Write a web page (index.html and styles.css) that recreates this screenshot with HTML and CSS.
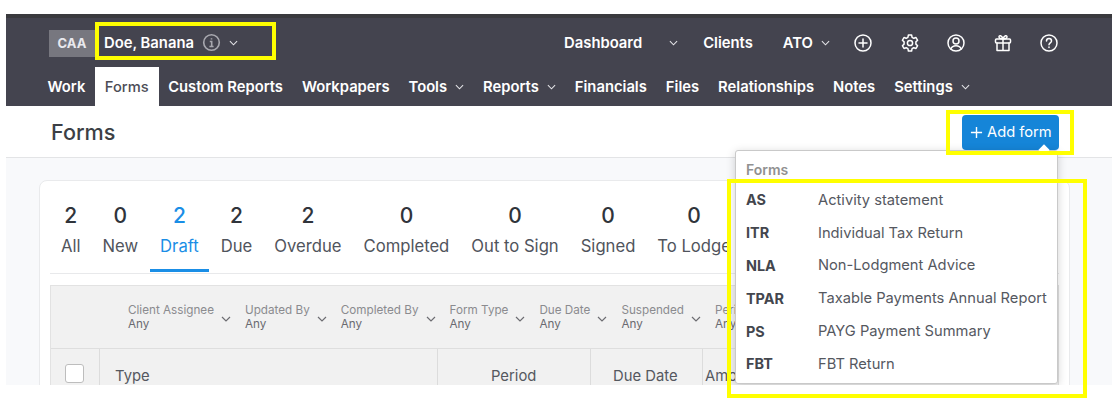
FILE: index.html
```html
<!DOCTYPE html>
<html lang="en">
<head>
<meta charset="utf-8">
<title>Forms</title>
<link rel="stylesheet" href="styles.css">
</head>
<body>
<div class="app">
  <header class="masthead">
    <div class="toprow">
      <span class="badge">CAA</span>
      <span class="client">Doe, Banana</span>
      <svg class="info" viewBox="0 0 20 20"><circle cx="10" cy="10" r="8.2"/><path d="M8.2 9h2v5M7.8 14.2h4.4M10 5.6v1.2"/></svg>
      <svg class="chev" viewBox="0 0 10 6"><path d="M1 1l4 4 4-4"/></svg>
      <nav class="topnav">
        <a class="toplink">Dashboard</a>
        <svg class="chev dash-chev" viewBox="0 0 10 6"><path d="M1 1l4 4 4-4"/></svg>
        <a class="toplink clients">Clients</a>
        <a class="toplink ato">ATO</a>
        <svg class="chev" viewBox="0 0 10 6"><path d="M1 1l4 4 4-4"/></svg>
        <div class="icons">
          <svg viewBox="0 0 20 20"><circle cx="10" cy="10" r="8"/><path d="M10 6v8M6 10h8"/></svg>
          <svg viewBox="0 0 20 20"><path d="M8.4 2h3.2l.5 2.3 1.7 1 2.2-.8 1.6 2.8-1.7 1.6v2.2l1.7 1.6-1.6 2.8-2.2-.8-1.7 1-.5 2.3H8.4l-.5-2.3-1.7-1-2.2.8-1.6-2.8 1.7-1.6V8.900L2.400 7.300 4 4.500l2.200.8 1.700-1z"/><circle cx="10" cy="10" r="2.600"/></svg>
          <svg viewBox="0 0 20 20"><circle cx="10" cy="10" r="8"/><circle cx="10" cy="8" r="3"/><path d="M4.800 16c1-2.400 3-3.200 5.200-3.200s4.200.8 5.200 3.200"/></svg>
          <svg viewBox="0 0 20 20"><rect x="2.500" y="6" width="15" height="4" rx="1"/><path d="M4 10v7.500h12V10M10 6v11.500M10 6C8 6 6 5.500 6 3.800 6 2 8.800 2 10 6zM10 6c2 0 4-.5 4-2.200C14 2 11.200 2 10 6z"/></svg>
          <svg viewBox="0 0 20 20"><circle cx="10" cy="10" r="8"/><path d="M7.500 8c0-3.200 5-3.200 5 0 0 2-2.500 1.800-2.500 3.800M10 14v.6"/></svg>
        </div>
      </nav>
    </div>
    <nav class="mainnav">
      <a class="navitem">Work</a>
      <a class="navitem active">Forms</a>
      <a class="navitem">Custom Reports</a>
      <a class="navitem">Workpapers</a>
      <a class="navitem">Tools<svg class="chev" viewBox="0 0 10 6"><path d="M1 1l4 4 4-4"/></svg></a>
      <a class="navitem">Reports<svg class="chev" viewBox="0 0 10 6"><path d="M1 1l4 4 4-4"/></svg></a>
      <a class="navitem">Financials</a>
      <a class="navitem">Files</a>
      <a class="navitem">Relationships</a>
      <a class="navitem">Notes</a>
      <a class="navitem">Settings<svg class="chev" viewBox="0 0 10 6"><path d="M1 1l4 4 4-4"/></svg></a>
    </nav>
  </header>

  <div class="pagehead">
    <h1>Forms</h1>
    <button class="addbtn"><svg viewBox="0 0 14 14"><path d="M7 1v12M1 7h12"/></svg>Add form</button>
  </div>

  <main class="content">
    <section class="card">
      <div class="tabs">
        <div class="tab"><b>2</b><span>All</span></div>
        <div class="tab"><b>0</b><span>New</span></div>
        <div class="tab current"><b>2</b><span>Draft</span></div>
        <div class="tab"><b>2</b><span>Due</span></div>
        <div class="tab"><b>2</b><span>Overdue</span></div>
        <div class="tab"><b>0</b><span>Completed</span></div>
        <div class="tab"><b>0</b><span>Out to Sign</span></div>
        <div class="tab"><b>0</b><span>Signed</span></div>
        <div class="tab"><b>0</b><span>To Lodge</span></div>
      </div>
      <div class="panel">
        <div class="filters">
          <div class="filter"><div><span>Client Assignee</span><em>Any</em></div><svg class="fchev" viewBox="0 0 10 6"><path d="M1 1l4 4 4-4"/></svg></div>
          <div class="filter"><div><span>Updated By</span><em>Any</em></div><svg class="fchev" viewBox="0 0 10 6"><path d="M1 1l4 4 4-4"/></svg></div>
          <div class="filter"><div><span>Completed By</span><em>Any</em></div><svg class="fchev" viewBox="0 0 10 6"><path d="M1 1l4 4 4-4"/></svg></div>
          <div class="filter"><div><span>Form Type</span><em>Any</em></div><svg class="fchev" viewBox="0 0 10 6"><path d="M1 1l4 4 4-4"/></svg></div>
          <div class="filter"><div><span>Due Date</span><em>Any</em></div><svg class="fchev" viewBox="0 0 10 6"><path d="M1 1l4 4 4-4"/></svg></div>
          <div class="filter"><div><span>Suspended</span><em>Any</em></div><svg class="fchev" viewBox="0 0 10 6"><path d="M1 1l4 4 4-4"/></svg></div>
          <div class="filter"><div><span>Period</span><em>Any</em></div></div>
        </div>
        <div class="thead">
          <div class="th th-check"><span class="checkbox"></span></div>
          <div class="th th-type">Type</div>
          <div class="th th-period">Period</div>
          <div class="th th-due">Due Date</div>
          <div class="th th-amt">Amount</div>
        </div>
      </div>
    </section>
  </main>

  <div class="popover">
    <div class="pophead">Forms</div>
    <div class="poprow"><b>AS</b><span>Activity statement</span></div>
    <div class="poprow"><b>ITR</b><span>Individual Tax Return</span></div>
    <div class="poprow"><b>NLA</b><span>Non-Lodgment Advice</span></div>
    <div class="poprow"><b>TPAR</b><span>Taxable Payments Annual Report</span></div>
    <div class="poprow"><b>PS</b><span>PAYG Payment Summary</span></div>
    <div class="poprow"><b>FBT</b><span>FBT Return</span></div>
  </div>
</div>
<div class="mark mark-client"></div>
<div class="mark mark-add"></div>
<div class="mark mark-list"></div>
</body>
</html>
```
FILE: styles.css
```css
* { box-sizing: border-box; }
html, body { margin: 0; padding: 0; background: #fff; }
body { position: relative; width: 1112px; height: 410px; overflow: hidden; padding: 14px 0 0 6px; font-family: Inter, "Liberation Sans", sans-serif; color: #3a3f47; }
.app { position: relative; width: 1106px; height: 371px; overflow: hidden; background: #f8f9fb; }
.masthead { background: #44444f; border-top: 4px solid #3a3a3e; height: 92px; color: #fff; }
.toprow { display: flex; align-items: center; height: 49px; padding: 0 0 0 43px; }
.badge { background: #77777f; color: #e9e9ee; font-size: 13px; font-weight: 700; width: 46px; height: 27px; display: flex; align-items: center; justify-content: center; margin-top: 1px; }
.client { font-size: 14.800px; font-weight: 600; margin-left: 9px; }
.info { width: 19px; height: 19px; margin-left: 8px; fill: none; stroke: #a8a8af; stroke-width: 1.700; }
.chev { width: 9px; height: 6px; fill: none; stroke: #e4e4e8; stroke-width: 1.200; margin-left: 8px; flex: none; }
.topnav { display: flex; align-items: center; margin-left: auto; margin-right: 53px; }
.toplink { font-size: 14.800px; font-weight: 600; }
.dash-chev { margin-left: 27px; }
.clients { margin-left: 25px; }
.ato { margin-left: 30px; }
.icons { display: flex; gap: 26.500px; margin-left: 23px; }
.icons svg { width: 20px; height: 20px; fill: none; stroke: #fff; stroke-width: 1.500; stroke-linejoin: round; stroke-linecap: round; }
.mainnav { display: flex; align-items: stretch; height: 39px; padding-left: 32px; }
.navitem { display: flex; align-items: center; font-size: 14.770px; font-weight: 600; padding: 0 9.500px; }
.navitem.active { background: #fff; color: #4c4c56; font-size: 14.700px; font-weight: 500; padding: 0 10px; }
.pagehead { display: flex; align-items: center; justify-content: space-between; height: 52px; background: #fff; border-bottom: 1px solid #e3e4e6; padding: 0 53px 0 45px; }
h1 { margin: 0; font-size: 21.600px; font-weight: 500; color: #3c3f45; }
.addbtn { display: flex; align-items: center; gap: 4px; width: 97px; height: 35px; margin-top: 1px; padding: 0 0 0 8px; border: 0; border-radius: 4px; background: #1585d8; color: #fff; font: 400 14.700px Inter, "Liberation Sans", sans-serif; white-space: nowrap; }
.addbtn svg { width: 13px; height: 13px; fill: none; stroke: #fff; stroke-width: 1.500; }
.content { padding: 22px 42px 0 33px; }
.card { background: #fff; border: 1px solid #e9eaec; border-radius: 8px 8px 0 0; padding: 0 10px; height: 230px; overflow: hidden; }
.tabs { display: flex; gap: 2px; height: 93px; padding: 23px 0 0 1px; border-bottom: 1px solid #e8e9eb; }
.tab { display: flex; flex-direction: column; align-items: center; padding: 0 10px; height: 68px; }
.tab b { font-size: 21px; font-weight: 500; line-height: 24px; color: #30343b; }
.tab span { font-size: 16.650px; line-height: 20px; margin-top: 8px; color: #50545c; white-space: nowrap; }
.tab.current { border-bottom: 3px solid #1a8ee6; }
.tab.current b, .tab.current span { color: #1a8ee6; }
.panel { margin-top: 11px; background: #f1f1f1; border: 1px solid #e2e2e2; }
.filters { display: flex; height: 63px; padding-left: 77px; border-bottom: 1px solid #dedede; align-items: center; }
.filter { display: flex; align-items: center; margin-right: 14px; }
.filter span, .filter em { display: block; font-size: 11.700px; font-style: normal; line-height: 14px; }
.filter span { color: #8b8b8f; }
.filter em { color: #6a6a70; }
.fchev { width: 10px; height: 6px; fill: none; stroke: #6d6d72; stroke-width: 1.200; margin: 4px 0 0 7px; }
.thead { display: flex; height: 40px; }
.th { display: flex; align-items: center; font-size: 14.800px; color: #55585f; border-right: 1px solid #dcdcdc; height: 100%; padding-top: 14px; }
.th-check { width: 49px; padding: 9px 0 0 14px; }
.th-type { width: 338px; padding-left: 15px; }
.th-period { width: 153px; padding-left: 53px; }
.th-due { width: 112px; padding-left: 22px; }
.th-amt { border: 0; padding-left: 2px; }
.checkbox { width: 19px; height: 19px; background: #fff; border: 1px solid #bdbdbd; border-radius: 3px; }
.popover { position: absolute; left: 729px; top: 136px; width: 323px; height: 234px; background: #fff; border: 1px solid #c9c9c9; border-radius: 3px; box-shadow: 0 2px 10px rgba(0,0,0,.18); padding: 9px 10px 0; }
.popover::before { content: ""; position: absolute; right: 9px; top: -5px; width: 8px; height: 8px; background: #fff; transform: rotate(45deg); }
.pophead { font-size: 14px; font-weight: 600; color: #919191; line-height: 20px; margin-bottom: 3.500px; }
.poprow { display: flex; align-items: center; height: 32.800px; font-size: 14.700px; color: #55585f; white-space: nowrap; }
.poprow b { width: 72px; font-weight: 700; font-size: 14.400px; color: #43464d; }
.mark { position: absolute; border: 4px solid #ffff00; }
.mark-client { left: 95px; top: 22px; width: 181px; height: 38px; }
.mark-add { left: 946px; top: 110px; width: 128px; height: 45px; }
.mark-list { left: 727px; top: 179px; width: 360px; height: 219px; }
```
